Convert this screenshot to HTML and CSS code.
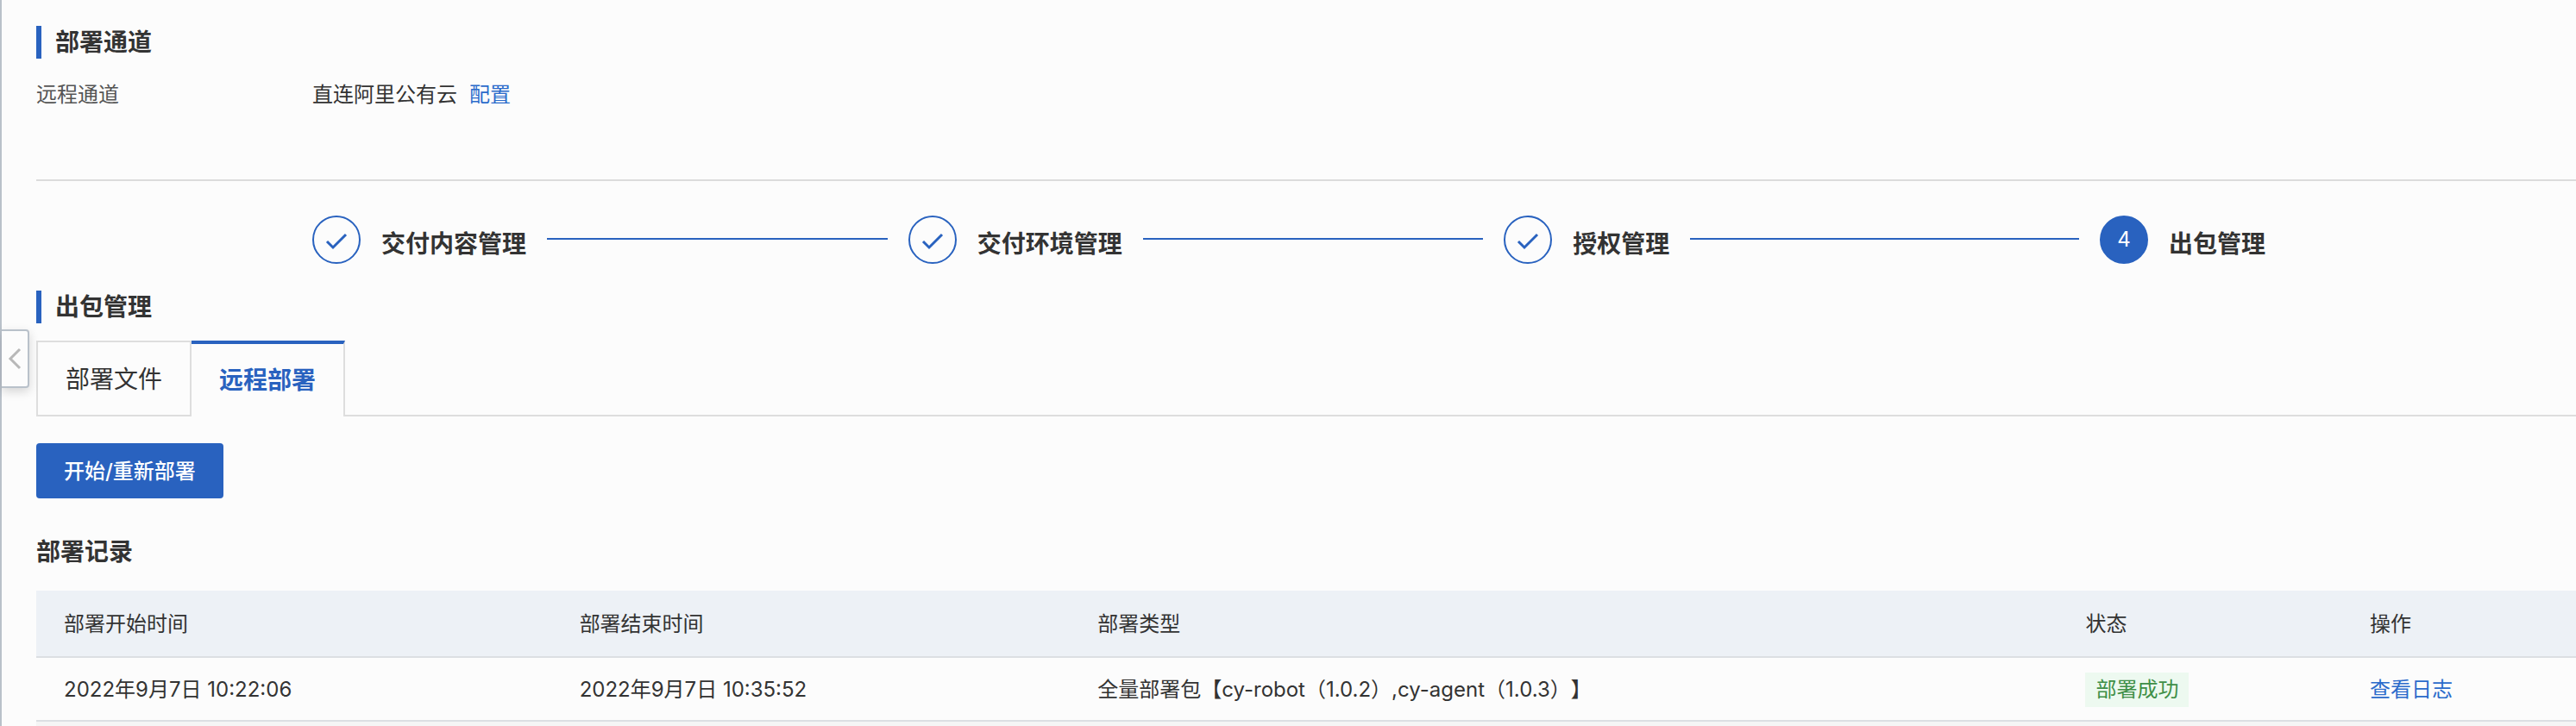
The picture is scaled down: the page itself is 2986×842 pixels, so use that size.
FILE: index.html
```html
<!DOCTYPE html>
<html lang="zh-CN">
<head>
    <meta charset="UTF-8">
    <meta name="viewport" content="width=device-width, initial-scale=1.0">
    <title>出包管理</title>
    <link rel="stylesheet" href="styles.css">
</head>
<body>
    <main class="page">
        <button class="collapse-btn" type="button" aria-label="收起">
            <svg width="16" height="26" viewBox="0 0 16 26">
                <path d="M14 2 L3 13 L14 24" fill="none" stroke="#b8b8b8" stroke-width="3"/>
            </svg>
        </button>

        <section class="channel">
            <h2 class="section-title">部署通道</h2>
            <div class="info-row">
                <span class="info-label">远程通道</span>
                <span class="info-value">直连阿里公有云</span>
                <a class="link" href="#">配置</a>
            </div>
        </section>

        <ol class="steps">
            <li class="step">
                <span class="step-icon">
                    <svg width="28" height="28" viewBox="0 0 28 28"><path d="M3 16 L10 23 L25 8" fill="none" stroke="#2962bf" stroke-width="3"/></svg>
                </span>
                <span class="step-label">交付内容管理</span>
            </li>
            <li class="step">
                <span class="step-icon">
                    <svg width="28" height="28" viewBox="0 0 28 28"><path d="M3 16 L10 23 L25 8" fill="none" stroke="#2962bf" stroke-width="3"/></svg>
                </span>
                <span class="step-label">交付环境管理</span>
            </li>
            <li class="step">
                <span class="step-icon">
                    <svg width="28" height="28" viewBox="0 0 28 28"><path d="M3 16 L10 23 L25 8" fill="none" stroke="#2962bf" stroke-width="3"/></svg>
                </span>
                <span class="step-label">授权管理</span>
            </li>
            <li class="step current">
                <span class="step-icon">4</span>
                <span class="step-label">出包管理</span>
            </li>
        </ol>

        <section class="package">
            <h2 class="section-title">出包管理</h2>
            <div class="tabs" role="tablist">
                <button class="tab" type="button" role="tab" aria-selected="false">部署文件</button>
                <button class="tab active" type="button" role="tab" aria-selected="true">远程部署</button>
            </div>

            <button class="primary-btn" type="button">开始/重新部署</button>

            <h3 class="table-title">部署记录</h3>
            <table class="records">
                <colgroup>
                    <col class="col-start">
                    <col class="col-end">
                    <col class="col-type">
                    <col class="col-status">
                    <col>
                </colgroup>
                <thead>
                    <tr>
                        <th>部署开始时间</th>
                        <th>部署结束时间</th>
                        <th>部署类型</th>
                        <th>状态</th>
                        <th>操作</th>
                    </tr>
                </thead>
                <tbody>
                    <tr>
                        <td>2022年9月7日 10:22:06</td>
                        <td>2022年9月7日 10:35:52</td>
                        <td>全量部署包【cy-robot（1.0.2）,cy-agent（1.0.3）】</td>
                        <td><span class="tag">部署成功</span></td>
                        <td><a class="link" href="#">查看日志</a></td>
                    </tr>
                </tbody>
            </table>
            <div class="records-rest"></div>
        </section>
    </main>
</body>
</html>
```
FILE: styles.css
```css
* {
    box-sizing: border-box;
}

body {
    margin: 0;
    color: #333;
    font-family: Inter, "Noto Sans CJK SC", sans-serif;
    font-size: 24px;
    line-height: 36px;
    text-spacing-trim: space-all;
}

button {
    font: inherit;
    cursor: pointer;
}

.page {
    position: relative;
    display: flex;
    flex-direction: column;
    min-height: 100vh;
    padding: 30px 0 0 40px;
    border-left: 2px solid #b9c1ca;
    background: #fcfcfc;
}

.link {
    color: #2b6bcb;
    text-decoration: none;
}

/* sidebar handle, sits over the left edge */
.collapse-btn {
    position: absolute;
    top: 382px;
    left: 0;
    display: flex;
    align-items: center;
    width: 32px;
    height: 68px;
    padding: 0 0 0 7px;
    border: 2px solid #b9c1ca;
    border-left: none;
    border-radius: 0 4px 4px 0;
    background: #fcfcfc;
    box-shadow: 0 4px 12px rgba(0, 0, 0, 0.16);
}

.section-title {
    margin: 0;
    padding-left: 16px;
    border-left: 6px solid #2962bf;
    font-size: 28px;
    font-weight: 600;
    line-height: 38px;
}

.channel {
    padding-bottom: 80px;
    border-bottom: 2px solid #dcdcdc;
}

.info-row {
    display: flex;
    margin-top: 24px;
}

.info-label {
    width: 320px;
    color: #555;
}

.info-value {
    margin-right: 14px;
}

.steps {
    display: flex;
    margin: 0;
    padding: 40px 360px 31px 320px;
    list-style: none;
}

.step {
    display: flex;
    flex: 1;
    align-items: center;
    gap: 24px;
}

.step:not(.current)::after {
    content: "";
    flex: 1;
    height: 2px;
    margin: 0 24px 2px 0;
    background: #2962bf;
}

.step.current {
    flex: none;
}

.step-icon {
    display: flex;
    align-items: center;
    justify-content: center;
    width: 56px;
    height: 56px;
    border: 2px solid #2962bf;
    border-radius: 50%;
}

.current .step-icon {
    background: #2962bf;
    color: #fff;
}

.step-label {
    padding-top: 10px;
    font-size: 28px;
    font-weight: 600;
}

.package {
    display: flex;
    flex: 1;
    flex-direction: column;
}

.tabs {
    display: flex;
    margin-top: 20px;
}

.tabs::after {
    content: "";
    flex: 1;
    border-bottom: 2px solid #dedede;
}

.tab {
    height: 88px;
    padding: 2px 32px 0;
    border: 2px solid #dedede;
    background: none;
    color: #333;
    font-size: 28px;
}

.tab.active {
    padding-top: 0;
    border-top: 4px solid #2962bf;
    border-bottom: none;
    border-left: none;
    color: #2962bf;
    font-weight: 600;
}

.primary-btn {
    align-self: flex-start;
    height: 64px;
    margin-top: 31px;
    padding: 2px 32px 0;
    border: none;
    border-radius: 4px;
    background: #2962bf;
    color: #fff;
    font-weight: 500;
}

.table-title {
    margin: 41px 0 24px;
    font-size: 28px;
    font-weight: 600;
    line-height: 42px;
}

.records {
    width: 100%;
    border-collapse: separate;
    border-spacing: 0;
    table-layout: fixed;
}

.col-start {
    width: 20.3%;
}

.col-end {
    width: 20.4%;
}

.col-type {
    width: 38.9%;
}

.col-status {
    width: 11.2%;
}

.records th,
.records td {
    padding: 2px 32px 0;
    border-bottom: 2px solid #dcdfe3;
    font-weight: 400;
    text-align: left;
}

.records th {
    height: 78px;
    background: #edf1f6;
}

.records td {
    height: 74px;
}

/* shaded area under the last record */
.records-rest {
    flex: 1;
    background: #f5f5f5;
}

.tag {
    display: inline-block;
    padding: 0 12px;
    background: #edf9f0;
    color: #3f8f47;
    line-height: 40px;
}
```
